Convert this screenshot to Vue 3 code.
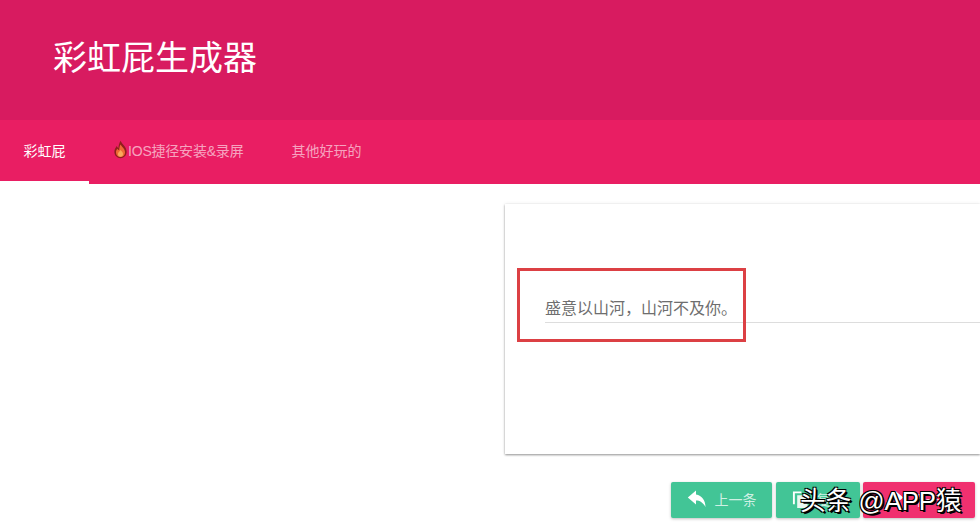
<template>
  <div class="page">
    <header class="title-bar">
      <h1 class="title">彩虹屁生成器</h1>
    </header>

    <nav class="tabs">
      <a
        v-for="tab in tabs"
        :key="tab.text"
        class="tab"
        :class="{ active: tab.active, tight: tab.fire }"
      >
        <svg v-if="tab.fire" class="fire" viewBox="0 0 14 18" width="15" height="19">
          <path d="M7 .8C8 3.400 12.800 6.600 12.800 11.200 12.800 14.800 10.200 17.200 7 17.200S1.200 14.800 1.200 11.200C1.200 8.800 2.600 7.400 3.400 5.800 4 7 4.400 7.400 5 7.800 5.200 5.400 5.800 3 7 .8Z" fill="#8f1f1c" />
          <path d="M7 4.200C8 6.200 11.300 8.200 11.300 11.500 11.300 14.200 9.400 16 7 16S2.700 14.200 2.700 11.500C2.700 10 3.400 9 3.900 8.200 4.400 9 5 9.400 5.800 9.600 5.800 7.800 6.200 5.800 7 4.200Z" fill="#ef6a35" />
          <path d="M7 9.400C8 10.600 9.400 11.600 9.400 13.200 9.400 14.800 8.300 15.800 7 15.800S4.600 14.800 4.600 13.200C4.600 11.600 6.200 10.800 7 9.400Z" fill="#f9a85c" />
        </svg>
        <span>{{ tab.text }}</span>
      </a>
    </nav>

    <main class="content">
      <section class="card">
        <div class="line">盛意以山河，山河不及你。</div>
      </section>
      <div class="highlight"></div>

      <div class="actions">
        <button class="btn prev">
          <svg viewBox="0 0 20 18" width="20" height="18">
            <path d="M9 .5 .8 7.500 9 14.500V10.500C12.800 10.500 15.800 12.300 18.500 17 18.500 10.500 15 5.500 9 4.500Z" fill="#fff" />
          </svg>
          <span>上一条</span>
        </button>
        <button class="btn copy">
          <svg viewBox="0 0 18 20" width="17" height="19">
            <path d="M1 1.500H10V3.500H3V15H1Z" fill="#fff" />
            <path d="M5.500 5.500H16.500V19H5.500Z" fill="#eaf8f2" />
          </svg>
          <span>复制</span>
        </button>
        <button class="btn next">
          <svg viewBox="0 0 20 18" width="20" height="18">
            <path d="M11 .5 19.200 7.500 11 14.500V10.500C7.200 10.500 4.200 12.300 1.500 17 1.500 10.500 5 5.500 11 4.500Z" fill="#fff" />
          </svg>
          <span>下一条</span>
        </button>
      </div>

      <div class="watermark">头条 @APP猿</div>
    </main>
  </div>
</template>

<script setup>
const tabs = [
  { text: '彩虹屁', active: true },
  { text: 'IOS捷径安装&录屏', fire: true },
  { text: '其他好玩的' }
]
</script>

<style scoped>
.page {
  width: 980px;
  height: 532px;
  overflow: hidden;
  font-family: "Liberation Sans", "Noto Sans CJK SC", sans-serif;
  background: #fff;
}

.title-bar {
  height: 120px;
  padding-left: 53px;
  display: flex;
  align-items: center;
  box-sizing: border-box;
  background: #d81b60;
}

.title {
  margin: -10px 0 0;
  font-size: 34px;
  font-weight: 400;
  color: #fff;
}

.tabs {
  height: 64px;
  display: flex;
  background: #e91e63;
}

.tab {
  display: flex;
  align-items: center;
  justify-content: center;
  box-sizing: border-box;
  padding: 0 24px 2px;
  font-size: 14px;
  color: rgba(255, 255, 255, 0.6);
  border-bottom: 3px solid transparent;
}

.tab.tight {
  letter-spacing: -0.2px;
}

.tab.active {
  padding: 0 23px 2px;
  width: 89px;
  color: #fff;
  border-bottom-color: #fff;
}

.fire {
  flex: none;
}

.content {
  position: relative;
  height: 348px;
  display: flex;
  flex-direction: column;
  align-items: flex-end;
  padding-top: 20px;
  box-sizing: border-box;
}

.card {
  width: 475px;
  height: 250px;
  box-sizing: border-box;
  padding: 94px 0 0 40px;
  background: #fff;
  box-shadow: 0 1px 2px rgba(0, 0, 0, 0.4), 0 0 4px rgba(0, 0, 0, 0.08);
}

.line {
  height: 24px;
  line-height: 21px;
  font-size: 16px;
  color: #6e6e6e;
  border-bottom: 1px solid #ddd;
}

.highlight {
  position: absolute;
  left: 517px;
  top: 84px;
  width: 229px;
  height: 74px;
  box-sizing: border-box;
  border: 3px solid #dc4044;
}

.actions {
  display: flex;
  gap: 3px;
  margin-top: 28px;
  margin-right: 5px;
}

.btn {
  height: 36px;
  display: flex;
  align-items: center;
  justify-content: center;
  gap: 8px;
  padding: 0 0 2px;
  border: 0;
  border-radius: 2px;
  font-family: inherit;
  font-size: 14px;
  color: rgba(255, 255, 255, 0.75);
  box-shadow: 0 1px 3px rgba(0, 0, 0, 0.25);
}

.prev {
  width: 101px;
  margin-right: 1px;
  background: #42c596;
}

.copy {
  width: 84px;
  background: #42c596;
}

.next {
  width: 112px;
  background: #f0306f;
}

.watermark {
  position: absolute;
  left: 800px;
  top: 301px;
  font-size: 25.700px;
  line-height: 32px;
  white-space: nowrap;
  color: #fff;
  text-shadow: 1px 1px 0 #000, -1px 1px 0 #000, 1px -1px 0 #000, -1px -1px 0 #000, 2px 2px 0 #000;
}
</style>
